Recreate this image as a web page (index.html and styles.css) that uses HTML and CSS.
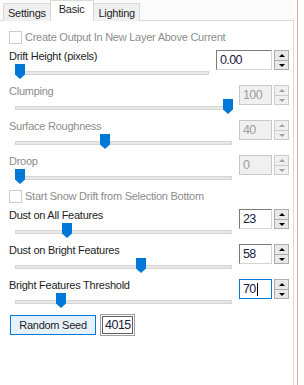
FILE: index.html
```html
<!DOCTYPE html>
<html lang="en">
<head>
    <meta charset="UTF-8">
    <title>Snow Drift - Basic</title>
    <link rel="stylesheet" href="styles.css">
</head>
<body>
    <div class="window">
        <div class="tabs">
            <div class="tab">Settings</div>
            <div class="tab selected">Basic</div>
            <div class="tab">Lighting</div>
        </div>

        <div class="panel">
            <label class="check disabled"><span class="box"></span>Create Output In New Layer Above Current</label>

            <div class="field">
                <div class="label">Drift Height (pixels)</div>
                <div class="slider short"><span class="track"></span><span class="thumb" style="left: 0px"></span></div>
                <div class="spin wide"><span class="value">0.00</span><span class="arrows"><i class="up"></i><i class="down"></i></span></div>
            </div>

            <div class="field disabled">
                <div class="label">Clumping</div>
                <div class="slider"><span class="track"></span><span class="thumb" style="left: 208px"></span></div>
                <div class="spin"><span class="value">100</span><span class="arrows"><i class="up"></i><i class="down"></i></span></div>
            </div>

            <div class="field disabled">
                <div class="label">Surface Roughness</div>
                <div class="slider"><span class="track"></span><span class="thumb" style="left: 85px"></span></div>
                <div class="spin"><span class="value">40</span><span class="arrows"><i class="up"></i><i class="down"></i></span></div>
            </div>

            <div class="field disabled">
                <div class="label">Droop</div>
                <div class="slider"><span class="track"></span><span class="thumb" style="left: 0px"></span></div>
                <div class="spin"><span class="value">0</span><span class="arrows"><i class="up"></i><i class="down"></i></span></div>
            </div>

            <label class="check disabled"><span class="box"></span>Start Snow Drift from Selection Bottom</label>

            <div class="field">
                <div class="label">Dust on All Features</div>
                <div class="slider"><span class="track"></span><span class="thumb" style="left: 47px"></span></div>
                <div class="spin"><span class="value">23</span><span class="arrows"><i class="up"></i><i class="down"></i></span></div>
            </div>

            <div class="field">
                <div class="label">Dust on Bright Features</div>
                <div class="slider"><span class="track"></span><span class="thumb" style="left: 121px"></span></div>
                <div class="spin"><span class="value">58</span><span class="arrows"><i class="up"></i><i class="down"></i></span></div>
            </div>

            <div class="field">
                <div class="label">Bright Features Threshold</div>
                <div class="slider"><span class="track"></span><span class="thumb" style="left: 41px"></span></div>
                <div class="spin focused"><span class="value">70<b class="caret"></b></span><span class="arrows"><i class="up"></i><i class="down"></i></span></div>
            </div>

            <div class="seed">
                <button class="btn">Random Seed</button>
                <div class="seed-box">4015</div>
            </div>
        </div>
    </div>
</body>
</html>
```

FILE: styles.css
```css
* {
    margin: 0;
    padding: 0;
    box-sizing: border-box;
}

body {
    font-family: 'Liberation Sans', Arial, sans-serif;
    font-size: 11px;
    letter-spacing: -0.25px;
    color: #1e1e1e;
    background: #fff;
    width: 304px;
    height: 385px;
    overflow: hidden;
}

.window {
    width: 298px;
    height: 385px;
    border-right: 1px solid #e8a0a0;
    display: flex;
    flex-direction: column;
}

.tabs {
    display: flex;
    align-items: flex-end;
    height: 21px;
    padding-left: 3px;
    background: #fbfbfb;
    border-bottom: 1px solid #d9d9d9;
    width: 294px;
}

.tab {
    height: 18px;
    padding: 0 4px;
    line-height: 18px;
    background: #f0f0f0;
    border: 1px solid #d9d9d9;
    border-bottom: none;
    margin-bottom: -1px;
}

.tab.selected {
    height: 21px;
    line-height: 17px;
    background: #fff;
    margin: 0 -1px -1px;
    padding: 0 9px 0 8px;
    position: relative;
    z-index: 1;
}

.panel {
    flex: 1;
    width: 294px;
    border-right: 1px solid #d9d9d9;
    padding: 9px 4px 0 9px;
    display: flex;
    flex-direction: column;
}

.check {
    display: flex;
    align-items: center;
    gap: 3px;
    height: 14px;
    margin-bottom: 5px;
}

.check .box {
    width: 13px;
    height: 13px;
    border: 1px solid #ccc;
    background: #fff;
}

.disabled {
    color: #8d8d8d;
}

.field {
    display: grid;
    grid-template-columns: 1fr auto;
    grid-template-rows: 14px 21px;
    height: 35px;
}

.label {
    line-height: 14px;
    white-space: nowrap;
}

.slider {
    position: relative;
    grid-column: 1;
    grid-row: 2;
    margin-left: 6px;
    width: 217px;
    height: 21px;
}

.slider.short {
    width: 194px;
}

.slider .track {
    position: absolute;
    left: 0;
    right: 0;
    top: 8px;
    height: 4px;
    background: #e7e7e7;
    border: 1px solid #d6d6d6;
}

.slider .thumb {
    position: absolute;
    top: 1px;
    width: 10px;
    height: 15px;
    background: #0078d7;
    clip-path: polygon(0 0, 100% 0, 100% 70%, 50% 100%, 0 70%);
}

.spin {
    grid-column: 2;
    grid-row: 1 / span 2;
    align-self: start;
    margin-top: 1px;
    display: flex;
    gap: 2px;
    height: 20px;
}

.spin .value {
    width: 33px;
    height: 20px;
    border: 1px solid #7a7a7a;
    border-right-color: #d5d5d5;
    border-bottom-color: #d5d5d5;
    background: #fff;
    padding-left: 3px;
    font-size: 12.5px;
    letter-spacing: -0.6px;
    color: #202040;
    display: flex;
    align-items: center;
}

.spin.wide .value {
    width: 56px;
}

.field.disabled .spin .value {
    background: #f0f0f0;
    color: #a0a0a0;
    border-color: #c8c8c8;
}

.spin.focused .value {
    border: 1px solid #0078d7;
}

.caret {
    width: 1px;
    height: 13px;
    margin-left: 1px;
    background: #000;
}

.arrows {
    width: 15px;
    height: 20px;
    display: flex;
    flex-direction: column;
    border: 1px solid #adadad;
    background: #e8e8e8;
}

.arrows i {
    flex: 1;
    position: relative;
}

.arrows i.up {
    border-bottom: 1px solid #adadad;
}

.arrows i::after {
    content: "";
    position: absolute;
    left: 4px;
    top: 3px;
    border-left: 3px solid transparent;
    border-right: 3px solid transparent;
}

.arrows i.up::after {
    border-bottom: 3px solid #000;
}

.arrows i.down::after {
    border-top: 3px solid #000;
}

.field.disabled .arrows {
    border-color: #cccccc;
    background: #f0f0f0;
}

.field.disabled .arrows i.up {
    border-bottom-color: #cccccc;
}

.field.disabled .arrows i.up::after {
    border-bottom-color: #a0a0a0;
}

.field.disabled .arrows i.down::after {
    border-top-color: #a0a0a0;
}

.seed {
    display: flex;
    align-items: center;
    gap: 4px;
    margin-top: 1px;
    margin-left: 1px;
}

.btn {
    width: 86px;
    height: 20px;
    font-family: inherit;
    font-size: 11px;
    letter-spacing: -0.25px;
    background: #e5f1fb;
    border: 1px solid #0078d7;
    color: #1e1e1e;
}

.seed-box {
    width: 35px;
    height: 22px;
    border: 1px solid #a0a0a0;
    outline: 1px solid #606060;
    outline-offset: -3px;
    padding-left: 4px;
    line-height: 21px;
    font-size: 12.5px;
    letter-spacing: -0.5px;
    color: #202040;
}
```
